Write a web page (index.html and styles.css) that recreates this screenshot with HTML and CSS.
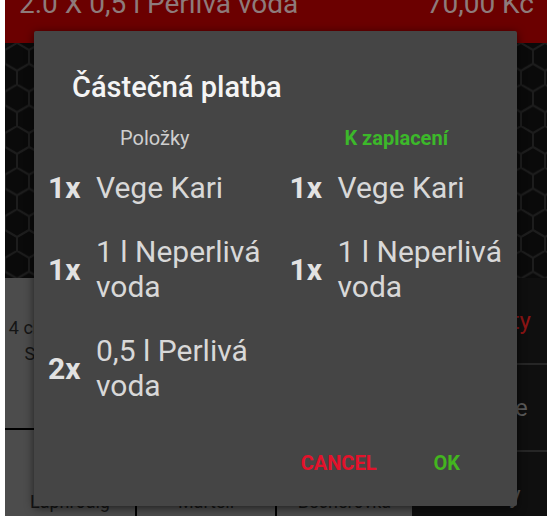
FILE: index.html
```html
<!DOCTYPE html>
<html lang="cs">
<head>
    <meta charset="UTF-8">
    <meta name="viewport" content="width=device-width, initial-scale=1.0">
    <title>Částečná platba</title>
    <link rel="stylesheet" href="styles.css">
</head>
<body>
    <div class="screen">
        <div class="order-bar">
            <span>2.0 X 0,5 l Perlivá voda</span>
            <span>70,00 Kč</span>
        </div>

        <div class="honeycomb">
            <svg width="100%" height="100%">
                <defs>
                    <pattern id="hex" width="24" height="41.57" patternUnits="userSpaceOnUse">
                        <path d="M12 0 L24 6.93 L24 20.78 L12 27.71 L0 20.78 L0 6.93 Z M12 27.71 V41.57" fill="none" stroke="#1d1d1d" stroke-width="2"/>
                    </pattern>
                </defs>
                <rect width="100%" height="100%" fill="url(#hex)"/>
            </svg>
        </div>

        <div class="lower">
            <div class="tiles">
                <div class="tile tile-top">4 cl Hruškovice Stock Spirit</div>
                <div class="tile tile-top">Fernet Stock</div>
                <div class="tile tile-top">Tuzemák</div>
                <div class="tile tile-bottom">Laphroaig</div>
                <div class="tile tile-bottom">Martell</div>
                <div class="tile tile-bottom">Becherovka</div>
            </div>
            <div class="categories">
                <div class="category active">Speciality</div>
                <div class="category">Sendviče</div>
                <div class="category">Polévky</div>
            </div>
        </div>

        <!-- dialog -->
        <div class="dialog">
            <div class="dialog-title">Částečná platba</div>
            <div class="columns">
                <div class="column">
                    <div class="col-head">Položky</div>
                    <div class="item-list">
                        <div class="item"><span class="qty">1x</span><span class="name">Vege Kari</span></div>
                        <div class="item"><span class="qty">1x</span><span class="name">1 l Neperlivá voda</span></div>
                        <div class="item"><span class="qty">2x</span><span class="name">0,5 l Perlivá voda</span></div>
                    </div>
                </div>
                <div class="column">
                    <div class="col-head pay">K zaplacení</div>
                    <div class="item-list">
                        <div class="item"><span class="qty">1x</span><span class="name">Vege Kari</span></div>
                        <div class="item"><span class="qty">1x</span><span class="name">1 l Neperlivá voda</span></div>
                    </div>
                </div>
            </div>
            <div class="dialog-buttons">
                <button class="btn btn-cancel">Cancel</button>
                <button class="btn btn-ok">OK</button>
            </div>
        </div>
    </div>
</body>
</html>
```

FILE: styles.css
```css
/* základ */
body {
    margin: 0;
    background-color: #fff;
    font-family: Roboto, "Noto Sans", Arial, sans-serif;
}

.screen {
    position: relative;
    height: 516px;
    margin: 0 2px 0 5px;
    background-color: #0c0c0c;
    overflow: hidden;
}

/* horní lišta objednávky */
.order-bar {
    height: 43px;
    display: flex;
    justify-content: space-between;
    align-items: flex-start;
    padding: 0 13px 0 14px;
    background-color: #6b0000;
    color: #8e7b7b;
    font-size: 28px;
    line-height: 28px;
}

.order-bar span {
    margin-top: -10px;
}

.honeycomb {
    height: 235px;
    background-color: #0a0a0a;
}

.honeycomb svg {
    display: block;
}

/* dlaždice a kategorie */
.lower {
    display: flex;
    height: 238px;
}

.tiles {
    width: 407px;
    display: grid;
    grid-template-columns: 130px 138px 135px;
    grid-template-rows: 150px 1fr;
    gap: 2px;
    background-color: #000;
}

.tile {
    background-color: #4c4c4c;
    color: #151515;
    font-size: 18px;
    line-height: 26px;
    text-align: center;
    padding: 0 2px;
}

.tile-top {
    padding-top: 37px;
}

.tile-bottom {
    padding-top: 59px;
}

.categories {
    flex: 1;
    background-color: #0f0f0f;
}

.category {
    height: 85px;
    display: flex;
    align-items: center;
    justify-content: center;
    border-bottom: 2px solid #262626;
    color: #5a5a5a;
    font-size: 24px;
}

.category.active {
    color: #8c1414;
}

/* dialog */
.dialog {
    position: absolute;
    left: 29px;
    top: 31px;
    width: 483px;
    height: 475px;
    display: flex;
    flex-direction: column;
    background-color: #454545;
    border-radius: 2px;
    box-shadow: 0 2px 10px rgba(0, 0, 0, 0.6);
}

.dialog-title {
    margin: 38px 0 0 38px;
    color: #f4f4f4;
    font-size: 29px;
    font-weight: 500;
    line-height: 36px;
}

.columns {
    display: grid;
    grid-template-columns: 1fr 1fr;
    margin-top: 21px;
}

.col-head {
    text-align: center;
    color: #cfcfcf;
    font-size: 20px;
    line-height: 24px;
}

.col-head.pay {
    color: #3cb82a;
    font-weight: 700;
}

.item-list {
    display: flex;
    flex-direction: column;
    gap: 29px;
    margin-top: 20px;
    padding-left: 14px;
}

.item {
    display: flex;
    align-items: center;
}

.qty {
    flex: none;
    width: 48px;
    color: #e2e2e2;
    font-size: 30px;
    font-weight: 700;
}

.name {
    color: #d8d8d8;
    font-size: 30px;
    line-height: 35px;
}

.dialog-buttons {
    margin-top: auto;
    display: flex;
    justify-content: flex-end;
    gap: 57px;
    padding: 0 57px 31px 0;
}

.btn {
    padding: 0;
    border: none;
    background: none;
    font-family: inherit;
    font-size: 20px;
    font-weight: 700;
    line-height: 24px;
    text-transform: uppercase;
    cursor: pointer;
}

.btn-cancel {
    color: #e3122b;
}

.btn-ok {
    color: #43b51f;
}
```
